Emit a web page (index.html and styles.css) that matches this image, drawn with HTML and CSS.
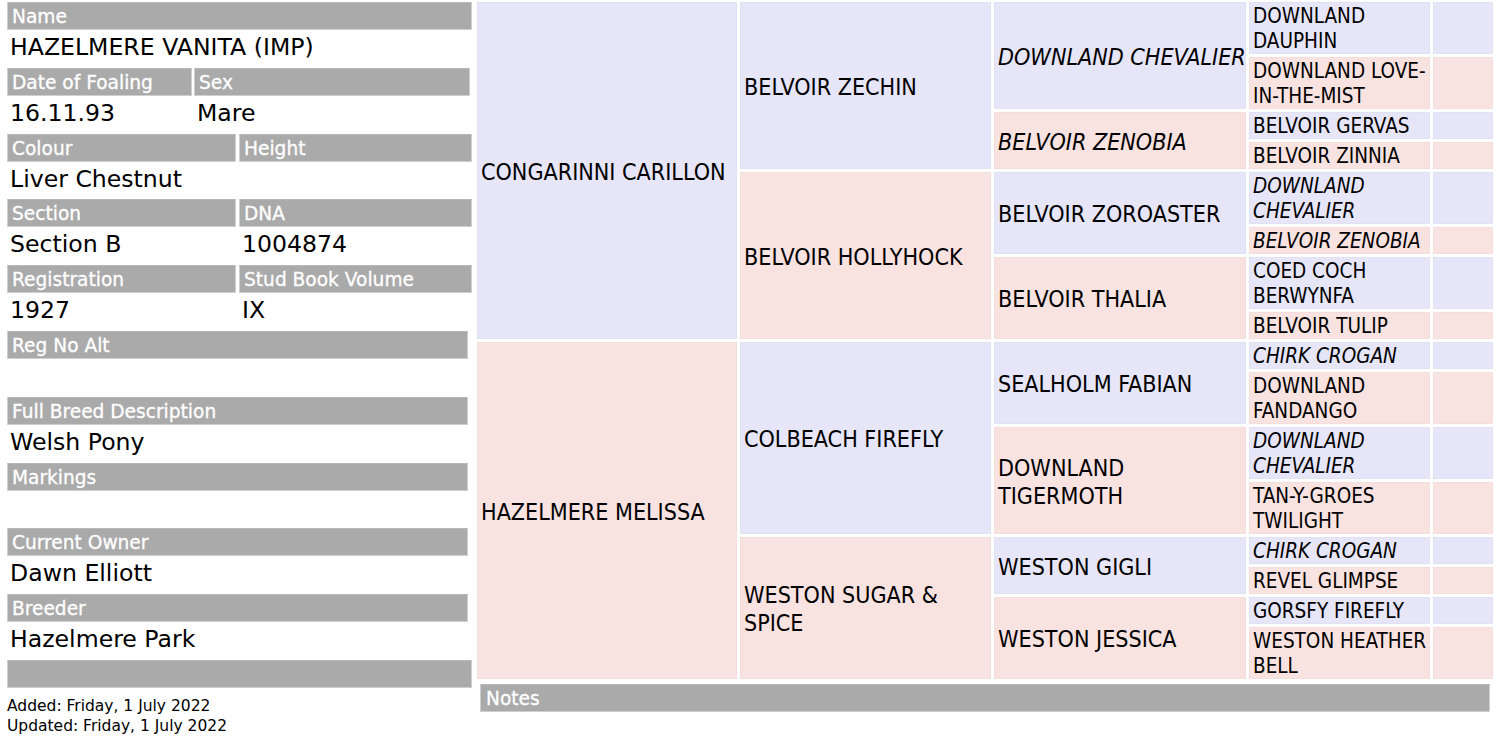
FILE: index.html
```html
<!DOCTYPE html>
<html lang="en">
<head>
<meta charset="utf-8">
<title>HAZELMERE VANITA (IMP)</title>
<link rel="stylesheet" href="styles.css">
</head>
<body>
<div class="page">
  <div class="details">
    <div class="field">
      <div class="label">Name</div>
      <div class="value">HAZELMERE VANITA (IMP)</div>
    </div>
    <div class="field pair pair-foal">
      <div class="label">Date of Foaling</div>
      <div class="label">Sex</div>
      <div class="value">16.11.93</div>
      <div class="value">Mare</div>
    </div>
    <div class="field pair">
      <div class="label">Colour</div>
      <div class="label">Height</div>
      <div class="value">Liver Chestnut</div>
      <div class="value"></div>
    </div>
    <div class="field pair">
      <div class="label">Section</div>
      <div class="label">DNA</div>
      <div class="value">Section B</div>
      <div class="value">1004874</div>
    </div>
    <div class="field pair">
      <div class="label">Registration</div>
      <div class="label">Stud Book Volume</div>
      <div class="value">1927</div>
      <div class="value">IX</div>
    </div>
    <div class="field narrow">
      <div class="label">Reg No Alt</div>
      <div class="value"></div>
    </div>
    <div class="field narrow">
      <div class="label">Full Breed Description</div>
      <div class="value">Welsh Pony</div>
    </div>
    <div class="field narrow">
      <div class="label">Markings</div>
      <div class="value"></div>
    </div>
    <div class="field narrow">
      <div class="label">Current Owner</div>
      <div class="value">Dawn Elliott</div>
    </div>
    <div class="field narrow">
      <div class="label">Breeder</div>
      <div class="value">Hazelmere Park</div>
    </div>
    <div class="label blank"></div>
    <div class="meta">
      <div>Added: Friday, 1 July 2022</div>
      <div>Updated: Friday, 1 July 2022</div>
    </div>
  </div>

  <div class="tree">
    <table class="pedigree">
      <colgroup>
        <col class="c1"><col class="c2"><col class="c3"><col class="c4"><col class="c5">
      </colgroup>
      <tbody>
        <tr>
          <td rowspan="8" class="sire big">CONGARINNI CARILLON</td>
          <td rowspan="4" class="sire big">BELVOIR ZECHIN</td>
          <td rowspan="2" class="sire big it">DOWNLAND CHEVALIER</td>
          <td class="sire small">DOWNLAND DAUPHIN</td>
          <td class="sire"></td>
        </tr>
        <tr>
          <td class="dam small">DOWNLAND LOVE-IN-THE-MIST</td>
          <td class="dam"></td>
        </tr>
        <tr>
          <td rowspan="2" class="dam big it">BELVOIR ZENOBIA</td>
          <td class="sire small">BELVOIR GERVAS</td>
          <td class="sire"></td>
        </tr>
        <tr>
          <td class="dam small">BELVOIR ZINNIA</td>
          <td class="dam"></td>
        </tr>
        <tr>
          <td rowspan="4" class="dam big">BELVOIR HOLLYHOCK</td>
          <td rowspan="2" class="sire big">BELVOIR ZOROASTER</td>
          <td class="sire small it">DOWNLAND CHEVALIER</td>
          <td class="sire"></td>
        </tr>
        <tr>
          <td class="dam small it">BELVOIR ZENOBIA</td>
          <td class="dam"></td>
        </tr>
        <tr>
          <td rowspan="2" class="dam big">BELVOIR THALIA</td>
          <td class="sire small">COED COCH BERWYNFA</td>
          <td class="sire"></td>
        </tr>
        <tr>
          <td class="dam small">BELVOIR TULIP</td>
          <td class="dam"></td>
        </tr>
        <tr>
          <td rowspan="8" class="dam big">HAZELMERE MELISSA</td>
          <td rowspan="4" class="sire big">COLBEACH FIREFLY</td>
          <td rowspan="2" class="sire big">SEALHOLM FABIAN</td>
          <td class="sire small it">CHIRK CROGAN</td>
          <td class="sire"></td>
        </tr>
        <tr>
          <td class="dam small">DOWNLAND FANDANGO</td>
          <td class="dam"></td>
        </tr>
        <tr>
          <td rowspan="2" class="dam big">DOWNLAND TIGERMOTH</td>
          <td class="sire small it">DOWNLAND CHEVALIER</td>
          <td class="sire"></td>
        </tr>
        <tr>
          <td class="dam small">TAN-Y-GROES TWILIGHT</td>
          <td class="dam"></td>
        </tr>
        <tr>
          <td rowspan="4" class="dam big">WESTON SUGAR &amp; SPICE</td>
          <td rowspan="2" class="sire big">WESTON GIGLI</td>
          <td class="sire small it">CHIRK CROGAN</td>
          <td class="sire"></td>
        </tr>
        <tr>
          <td class="dam small">REVEL GLIMPSE</td>
          <td class="dam"></td>
        </tr>
        <tr>
          <td rowspan="2" class="dam big">WESTON JESSICA</td>
          <td class="sire small">GORSFY FIREFLY</td>
          <td class="sire"></td>
        </tr>
        <tr>
          <td class="dam small">WESTON HEATHER BELL</td>
          <td class="dam"></td>
        </tr>
      </tbody>
    </table>
    <div class="label notes">Notes</div>
  </div>
</div>
</body>
</html>
```

FILE: styles.css
```css
* { box-sizing: border-box; }

html, body {
  margin: 0;
  padding: 0;
  background: #ffffff;
  color: #000000;
  font-family: "DejaVu Sans", Verdana, sans-serif;
}

.page {
  display: flex;
  align-items: flex-start;
  padding: 2px 0 0 7px;
}

/* ---------- left details panel ---------- */
.details {
  width: 465px;
  flex: 0 0 465px;
  display: flex;
  flex-direction: column;
}

.field {
  width: 465px;
}

.field.narrow {
  width: 461px;
}

.pair {
  display: grid;
  grid-template-columns: 229px 1fr;
  column-gap: 3px;
}

.pair-foal {
  width: 463px;
  grid-template-columns: 185px 1fr;
  column-gap: 2px;
}

.label {
  height: 28px;
  background: #aaaaaa;
  border: 1px solid #cfcfcf;
  border-top-color: #b8b8b8;
  color: #ffffff;
  font-weight: normal;
  font-size: 18.6px;
  line-height: 27px;
  padding-left: 4px;
  white-space: nowrap;
  overflow: hidden;
  -webkit-text-stroke: 0.3px #ffffff;
}

.value {
  height: 37.8px;
  font-size: 23.6px;
  line-height: 34px;
  padding-left: 3px;
  white-space: nowrap;
}

.label.blank {
  width: 465px;
}

.meta {
  margin-top: 8px;
  font-size: 15.5px;
  line-height: 20px;
}

/* ---------- pedigree ---------- */
.tree {
  margin-left: 2px;
  display: flex;
  flex-direction: column;
}

.pedigree {
  table-layout: fixed;
  width: 1022px;
  border-collapse: separate;
  border-spacing: 3px;
  margin-top: -3px;
  font-family: "DejaVu Sans Condensed", "DejaVu Sans", sans-serif;
  font-stretch: condensed;
}

.pedigree col.c1 { width: 260px; }
.pedigree col.c2 { width: 251px; }
.pedigree col.c3 { width: 252px; }
.pedigree col.c4 { width: 181px; }
.pedigree col.c5 { width: 60px; }

.pedigree td {
  padding: 2px 0 0 4px;
  vertical-align: middle;
  text-align: left;
}

.pedigree td.sire {
  background: #e6e6f8;
  box-shadow: inset 0 0 0 1px #e1e1f4;
}

.pedigree td.dam {
  background: #f9e3e1;
  box-shadow: inset 0 0 0 1px #f4dedb;
}

.pedigree td.big {
  font-size: 23.1px;
  line-height: 28px;
}

.pedigree td.small {
  font-size: 20.5px;
  line-height: 25px;
}

.pedigree td.it {
  font-style: italic;
}

.label.notes {
  width: 1010px;
  margin: 2px 0 0 6px;
  padding-left: 5px;
}
```
